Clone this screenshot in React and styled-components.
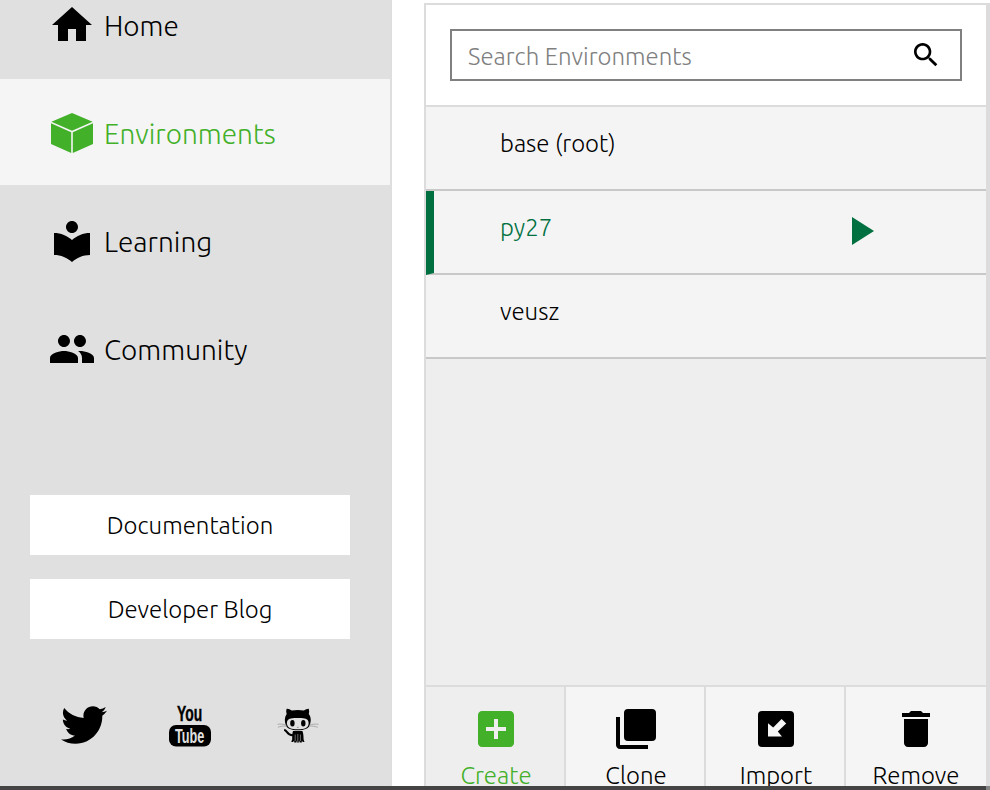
import React from "react";
import styled, { createGlobalStyle } from "styled-components";
import { FaTwitter } from "react-icons/fa";

const Global = createGlobalStyle`
  *, *::before, *::after { box-sizing: border-box; }
  body { margin: 0; background: #fff; overflow: hidden; }
  body, input, button { font-family: Ubuntu, "Noto Sans", "Open Sans", sans-serif; font-weight: 300; color: #000; }
  svg { display: block; flex: none; }
`;

const Window = styled.div`
  width: 990px;
  height: 790px;
  display: flex;
  flex-direction: column;
  overflow: hidden;
`;

const Body = styled.div`
  flex: none;
  height: 786px;
  display: flex;
  gap: 32px;
  overflow: hidden;
`;

const BottomEdge = styled.div`
  height: 4px;
  flex: none;
  background: #454445;
  border-right: 4px solid #858585;
`;

const Sidebar = styled.aside`
  width: 392px;
  flex: none;
  background: #e0e0e0;
  border-right: 2px solid #dedede;
`;

const Nav = styled.nav`
  margin-top: -29px;
`;

const NavItem = styled.a`
  display: flex;
  align-items: center;
  gap: 8px;
  height: 108px;
  padding: 2px 0 0 48px;
  border-bottom: 2px solid #e0e0e0;
  background: ${(p) => (p.$active ? "#f5f5f5" : "#e0e0e0")};
  color: ${(p) => (p.$active ? "#43b02a" : "#000")};
  font-size: 28px;
  line-height: 48px;
`;

const Label = styled.span`
  display: block;
  white-space: nowrap;
  padding-top: ${(p) => p.$drop || 0}px;
`;

const Links = styled.div`
  display: flex;
  flex-direction: column;
  gap: 24px;
  padding: 92px 40px 0 30px;
`;

const LinkButton = styled.button`
  height: 60px;
  border: 0;
  padding: 1px 0 0;
  background: #fff;
  display: flex;
  align-items: center;
  justify-content: center;
  font-size: 24px;
`;

const Social = styled.div`
  display: grid;
  grid-template-columns: 108px 108px 42px;
  align-items: center;
  height: 48px;
  margin: 62px 0 0 61px;
`;

const TwitterIcon = styled(FaTwitter)`
  margin-bottom: 2px;
`;

const Panel = styled.section`
  width: 566px;
  height: 783px;
  margin-top: 3px;
  display: flex;
  flex-direction: column;
  border: solid #dcdcdc;
  border-width: 2px 4px 0 2px;
  background: #eee;
`;

const SearchBar = styled.div`
  flex: none;
  height: 102px;
  padding: 24px 24px 0;
  background: #fff;
  border-bottom: 2px solid #dcdcdc;
`;

const SearchField = styled.label`
  display: flex;
  align-items: center;
  justify-content: space-between;
  height: 52px;
  padding: 0 18px 0 16px;
  border: 2px solid #808080;
  color: #808080;
  font-size: 24px;
  line-height: 28px;
`;

const Row = styled.div`
  flex: none;
  display: flex;
  align-items: center;
  justify-content: space-between;
  height: 84px;
  padding: 0 112px 9px ${(p) => (p.$active ? 66 : 74)}px;
  background: #f4f4f4;
  border-bottom: 2px solid #c8c8c8;
  border-left: ${(p) => (p.$active ? "8px solid #007041" : "0")};
  color: ${(p) => (p.$active ? "#007041" : "#000")};
  font-size: 24px;
  line-height: 28px;
`;

const PlayIcon = styled.svg`
  margin-top: 7px;
`;

const Actions = styled.div`
  flex: none;
  display: grid;
  grid-template-columns: 140px 140px 140px 140px;
  height: 101px;
  margin-top: auto;
  border-top: 2px solid #dcdcdc;
`;

const Action = styled.button`
  display: flex;
  flex-direction: column;
  align-items: center;
  padding: 18px 0 0 ${(p) => (p.$last ? 0 : 2)}px;
  border: 0;
  border-right: ${(p) => (p.$last ? "0" : "2px solid #dcdcdc")};
  background: ${(p) => (p.$active ? "#eee" : "#f5f5f5")};
  color: ${(p) => (p.$active ? "#43b02a" : "#000")};
  font-size: 24px;
  line-height: 28px;
`;

const Glyph = ({ d, size = 48, children }) => (
  <svg width={size} height={size} viewBox="0 0 24 24" fill="currentColor">
    {d && <path d={d} />}
    {children}
  </svg>
);

const icons = {
  home: "M10 20v-6h4v6h5v-8h3L12 3 2 12h3v8z",
  library:
    "M12 11.55C9.64 9.35 6.48 8 3 8v11c3.48 0 6.64 1.35 9 3.55 2.36-2.19 5.52-3.55 9-3.55V8c-3.48 0-6.64 1.35-9 3.55zM12 8c1.66 0 3-1.34 3-3s-1.34-3-3-3-3 1.34-3 3 1.34 3 3 3z",
  people:
    "M16 11c1.66 0 2.99-1.34 2.99-3S17.66 5 16 5s-3 1.34-3 3 1.34 3 3 3zm-8 0c1.66 0 2.99-1.34 2.99-3S9.66 5 8 5 5 6.34 5 8s1.34 3 3 3zm0 2c-2.33 0-7 1.17-7 3.5V19h14v-2.5c0-2.33-4.67-3.5-7-3.5zm8 0c-.29 0-.62.02-.97.05 1.16.84 1.97 1.97 1.97 3.45V19h6v-2.5c0-2.33-4.67-3.5-7-3.5z",
  search:
    "M15.5 14h-.79l-.28-.27C15.41 12.59 16 11.11 16 9.5 16 5.91 13.09 3 9.5 3S3 5.91 3 9.5 5.91 16 9.5 16c1.61 0 3.09-.59 4.23-1.57l.27.28v.79l5 4.99L20.49 19l-4.99-5zm-6 0C7.01 14 5 11.99 5 9.5S7.01 5 9.5 5 14 7.01 14 9.5 11.99 14 9.5 14z",
  create:
    "M19 3H5c-1.11 0-2 .9-2 2v14c0 1.1.89 2 2 2h14c1.1 0 2-.9 2-2V5c0-1.1-.9-2-2-2zm-2 10h-4v4h-2v-4H7v-2h4V7h2v4h4v2z",
  clone:
    "M4 6H2v14c0 1.1.9 2 2 2h14v-2H4zM8 2h12a2 2 0 0 1 2 2v12a2 2 0 0 1-2 2H8a2 2 0 0 1-2-2V4a2 2 0 0 1 2-2z",
  import:
    "M5 3h14a2 2 0 0 1 2 2v14a2 2 0 0 1-2 2H5a2 2 0 0 1-2-2V5a2 2 0 0 1 2-2z",
  remove:
    "M6 19c0 1.1.9 2 2 2h8c1.1 0 2-.9 2-2V7H6v12zM19 4h-3.5l-1-1h-5l-1 1H5v2h14V4z",
};

const Cube = () => (
  <Glyph>
    <path d="M12 2 22.3 6.4 12 10.9 1.7 6.4zM1.5 7.1l10.1 4.5V22L1.5 17.5zM22.5 7.1v10.4L12.4 22V11.6z" />
  </Glyph>
);

const YouTube = () => (
  <svg width="42" height="50" viewBox="0 0 42 50" fontFamily="Liberation Sans Narrow, Liberation Sans, sans-serif" fontWeight="700">
    <g transform="translate(8 20) scale(.6 1)">
      <text fontSize="21.5" textLength="42" lengthAdjust="spacingAndGlyphs" stroke="#000" strokeWidth=".4">You</text>
    </g>
    <rect y="24" width="42" height="21.5" rx="7" />
    <g transform="translate(6 41.5) scale(.6 1)">
      <text fontSize="20.5" fill="#e0e0e0" textLength="49" lengthAdjust="spacingAndGlyphs">Tube</text>
    </g>
  </svg>
);

const Octocat = () => (
  <svg width="42" height="36" viewBox="0 0 42 36">
    <path d="M16 23c-.8 2-.8 6-.8 8.500-.2 1.400-1.400 1.700-.9 2.300 1.400.4 2.500-.2 2.900-1.400v2.200h2.200l.5-2 .6 2.200h1l.6-2.200.6 2h2.100v-2.200c.4 1.200 1.400 1.800 2.600 1.400.6-.6-.8-1-.8-2.300 0-2.500-.2-6.500-1.200-8.500z" />
    <path d="M7.200 21.700c3.600 1 2.500 6 9 5.500" fill="none" stroke="#000" strokeWidth="2" />
    <path d="M18.200 26.500v6.500M20.800 26v7.500M23.400 26.500v6.500" stroke="#999" strokeWidth=".7" />
    <path d="M9.700.8C11.600.6 13.300 1.700 14.800 2.600c4-.8 8.200-.8 12 0C28.400 1.600 30 .7 31.700.8c.7 2.100.5 3.700.1 5.100 2.500 3.100 2.400 7.700.8 11.600-1.600 3.300-5.400 4.700-11.800 4.700S10.500 20.800 9 17.500C7.300 13.600 7.400 9 9.700 5.900 9.100 4.200 9 2.600 9.700.8z" />
    <path d="M14 10.400c4-.5 9.500-.5 13.600 0 3.200.4 4.600 2.900 3.900 6.200-.8 3.500-4 4.700-10.700 4.700s-9.900-1.200-10.700-4.700c-.7-3.300.7-5.800 3.900-6.200z" fill="#e0e0e0" />
    <ellipse cx="15.400" cy="15.200" rx="2.200" ry="3.300" />
    <ellipse cx="26.300" cy="15.200" rx="2.200" ry="3.300" />
    <path d="M19.900 19.300h1.800" stroke="#777" strokeWidth=".7" />
    <path d="M9.500 17.200C6 16 3 15.900.5 16.300M9.500 18c-3.400-.1-6.100.3-8.600 1.300M32 17.200c3.500-1.200 6.500-1.300 9.500-.9M32 18c3.400-.1 6.100.3 8.900 1.300" fill="none" stroke="#888" strokeWidth=".6" />
  </svg>
);

const navItems = [
  { text: "Home", icon: <Glyph d={icons.home} /> },
  { text: "Environments", icon: <Cube />, active: true },
  { text: "Learning", icon: <Glyph d={icons.library} /> },
  { text: "Community", icon: <Glyph d={icons.people} /> },
];

const environments = [
  { name: "base (root)" },
  { name: "py27", active: true },
  { name: "veusz" },
];

const actions = [
  { text: "Create", icon: "create", active: true },
  { text: "Clone", icon: "clone" },
  { text: "Import", icon: "import" },
  { text: "Remove", icon: "remove" },
];

export default function App() {
  return (
    <>
      <Global />
      <Window>
        <Body>
          <Sidebar>
            <Nav>
              {navItems.map((n) => (
                <NavItem key={n.text} $active={n.active}>
                  {n.icon}
                  <Label $drop={2}>{n.text}</Label>
                </NavItem>
              ))}
            </Nav>
            <Links>
              <LinkButton><Label>Documentation</Label></LinkButton>
              <LinkButton><Label>Developer Blog</Label></LinkButton>
            </Links>
            <Social>
              <TwitterIcon size={46} />
              <YouTube />
              <Octocat />
            </Social>
          </Sidebar>
          <Panel>
            <SearchBar>
              <SearchField>
                <Label $drop={4}>Search Environments</Label>
                <svg width="32" height="32" viewBox="0 0 24 24"><path d={icons.search} /></svg>
              </SearchField>
            </SearchBar>
            {environments.map((e) => (
              <Row key={e.name} $active={e.active}>
                <Label>{e.name}</Label>
                {e.active && (
                  <PlayIcon width="22" height="28" viewBox="0 0 22 28" fill="currentColor">
                    <path d="M0 0 22 14 0 28z" />
                  </PlayIcon>
                )}
              </Row>
            ))}
            <Actions>
              {actions.map((a, i) => (
                <Action key={a.text} $active={a.active} $last={i === actions.length - 1}>
                  <Glyph d={icons[a.icon]}>
                    {a.icon === "import" && <path d="M14.8 7l2.3 2.2-4.2 4.1L15 15.8H8V9.1l2.6 2.1z" fill="#f5f5f5" />}
                  </Glyph>
                  <Label $drop={9}>{a.text}</Label>
                </Action>
              ))}
            </Actions>
          </Panel>
        </Body>
        <BottomEdge />
      </Window>
    </>
  );
}
